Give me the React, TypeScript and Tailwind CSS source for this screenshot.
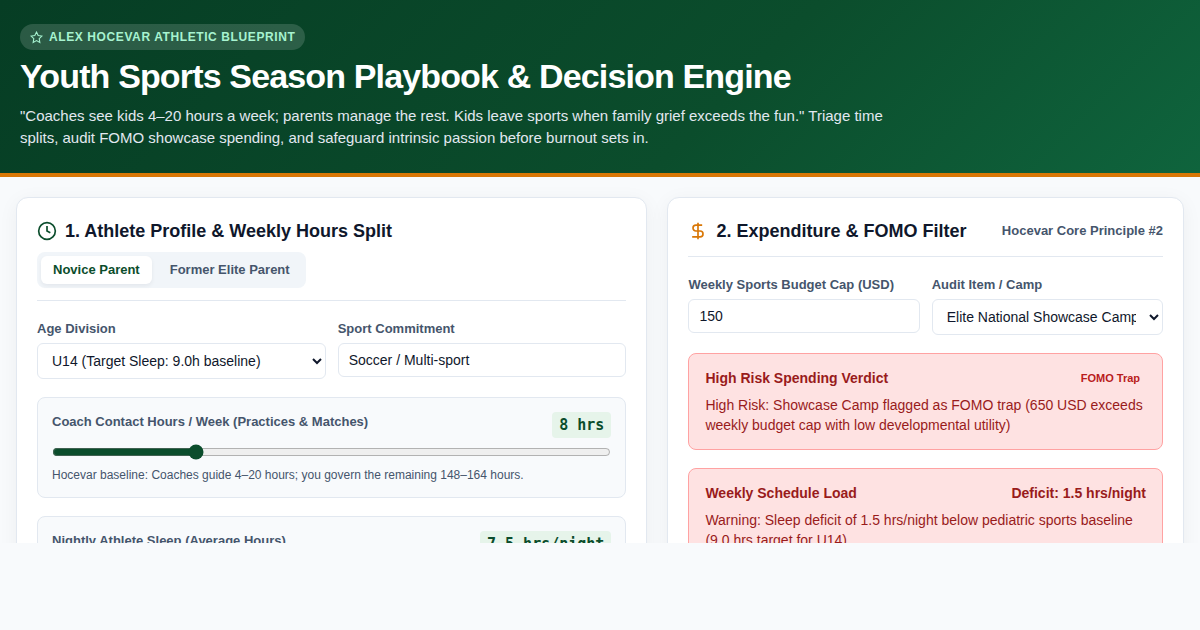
import React, { useState } from 'react';

interface SliderCardProps {
  id: string;
  label: string;
  unit: string;
  hint: string;
  min: number;
  max: number;
  step: number;
  value: number;
  onChange: (value: number) => void;
}

const SliderCard: React.FC<SliderCardProps> = ({ id, label, unit, hint, min, max, step, value, onChange }) => (
  <div className="rounded-lg border border-slate-200 bg-slate-50 p-3.5">
    <div className="flex items-start justify-between mb-1.5">
      <label htmlFor={id} className="text-[13px] leading-5 font-bold text-slate-600">{label}</label>
      <output htmlFor={id} className="rounded bg-[#e6f4ea] px-[7px] font-['DejaVu_Sans_Mono',monospace] text-[15px] leading-[26px] font-bold text-[#0b4d2c]">
        {value} {unit}
      </output>
    </div>
    <input
      id={id}
      type="range"
      min={min}
      max={max}
      step={step}
      value={value}
      onChange={(e) => onChange(Number(e.target.value))}
      className="block h-4 w-full accent-[#0b4d2c]"
    />
    <p className="mt-[7px] text-xs leading-4 text-slate-600">{hint}</p>
  </div>
);

interface AlertCardProps {
  title: string;
  aside: React.ReactNode;
  children: React.ReactNode;
}

const AlertCard: React.FC<AlertCardProps> = ({ title, aside, children }) => (
  <div className="rounded-lg border border-red-300 bg-[#fee2e2] px-4 py-3.5 text-[#991b1b]">
    <div className="mb-[7px] flex items-center justify-between text-sm leading-5 font-bold">
      <h3>{title}</h3>
      {aside}
    </div>
    <p className="text-sm leading-5">{children}</p>
  </div>
);

const StarIcon = () => (
  <svg viewBox="0 0 24 24" className="size-[13px]" fill="none" stroke="currentColor" strokeWidth="2" aria-hidden="true">
    <polygon points="12 2 15.09 8.26 22 9.27 17 14.14 18.18 21.02 12 17.77 5.82 21.02 7 14.14 2 9.27 8.91 8.26 12 2" />
  </svg>
);

const ClockIcon = () => (
  <svg viewBox="0 0 24 24" className="size-5 text-[#0b4d2c]" fill="none" stroke="currentColor" strokeWidth="2" aria-hidden="true">
    <circle cx="12" cy="12" r="10" />
    <path d="M12 6v6l4 2" />
  </svg>
);

const DollarIcon = () => (
  <svg viewBox="0 0 24 24" className="size-5 text-[#d97706]" fill="none" stroke="currentColor" strokeWidth="2" aria-hidden="true">
    <path d="M12 2v20M17 5H9.5a3.5 3.5 0 0 0 0 7h5a3.5 3.5 0 0 1 0 7H5" />
  </svg>
);

const App: React.FC = () => {
  const [parentType, setParentType] = useState<'novice' | 'elite'>('novice');
  const [age, setAge] = useState('U14');
  const [sport, setSport] = useState('Soccer / Multi-sport');
  const [coachHours, setCoachHours] = useState(8);
  const [sleepHours, setSleepHours] = useState(7.5);
  const [budget, setBudget] = useState('150');
  const [auditItem, setAuditItem] = useState('showcase');

  const card = 'flex flex-col gap-[18px] rounded-xl border border-slate-200 bg-white p-5 shadow-[0_4px_20px_rgba(15,23,42,0.05)]';
  const cardHeader = 'flex flex-wrap items-center justify-between gap-2 border-b border-slate-200 pb-3';
  const cardTitle = 'flex items-center gap-2 text-lg leading-[26px] font-bold text-slate-900';
  const label = 'mb-1 block text-[13px] leading-5 font-bold text-slate-600';
  const input = 'block h-[34px] w-full rounded-md border border-slate-200 bg-white px-2.5 text-sm text-slate-900';
  const select = 'block h-9 w-full rounded-md border border-slate-200 bg-white px-2.5 text-sm text-slate-900';
  const tab = 'rounded-md px-3 text-[13px] leading-7 font-bold';
  const activeTab = 'bg-white text-[#0b4d2c] shadow-[0_2px_4px_rgba(15,23,42,0.06)]';

  return (
    <div className="h-screen bg-slate-50 pb-[87px] font-['Liberation_Sans',Arial,sans-serif]">
      <div className="h-full overflow-hidden">
        <header className="border-b-4 border-[#d97706] bg-[linear-gradient(135deg,#063d24_0%,#0b4d2c_60%,#0f643d_100%)] px-5 py-6 text-white">
          <div className="inline-flex items-center gap-1.5 rounded-full bg-white/15 px-2.5 text-xs leading-[26px] font-bold tracking-wider text-[#a7f3d0] uppercase">
            <StarIcon />
            Alex Hocevar Athletic Blueprint
          </div>
          <h1 className="mt-[5px] mb-[9px] text-[34px] leading-10 font-bold tracking-tight">Youth Sports Season Playbook &amp; Decision Engine</h1>
          <p className="max-w-[880px] text-[15px] leading-[22px] text-slate-200">
            "Coaches see kids 4–20 hours a week; parents manage the rest. Kids leave sports when family grief exceeds the fun." Triage time splits, audit FOMO showcase spending, and safeguard intrinsic passion before burnout sets in.
          </p>
        </header>

        <main className="grid grid-cols-[11fr_9fr] items-start gap-5 px-4 py-5">
          <section className={card}>
            <div className={cardHeader}>
              <h2 className={cardTitle}>
                <ClockIcon />
                1. Athlete Profile &amp; Weekly Hours Split
              </h2>
              <div className="flex gap-1.5 rounded-lg bg-slate-100 p-1">
                <button onClick={() => setParentType('novice')} className={`${tab} ${parentType === 'novice' ? activeTab : 'text-slate-600'}`}>
                  Novice Parent
                </button>
                <button onClick={() => setParentType('elite')} className={`${tab} ${parentType === 'elite' ? activeTab : 'text-slate-600'}`}>
                  Former Elite Parent
                </button>
              </div>
            </div>

            <div className="grid grid-cols-2 gap-3">
              <div>
                <label htmlFor="age" className={label}>Age Division</label>
                <select id="age" value={age} onChange={(e) => setAge(e.target.value)} className={select}>
                  <option value="U14">U14 (Target Sleep: 9.0h baseline)</option>
                </select>
              </div>
              <div>
                <label htmlFor="sport" className={label}>Sport Commitment</label>
                <input id="sport" type="text" value={sport} onChange={(e) => setSport(e.target.value)} className={input} />
              </div>
            </div>

            <SliderCard
              id="coach-hours"
              label="Coach Contact Hours / Week (Practices &amp; Matches)"
              unit="hrs"
              hint="Hocevar baseline: Coaches guide 4–20 hours; you govern the remaining 148–164 hours."
              min={4}
              max={20}
              step={1}
              value={coachHours}
              onChange={setCoachHours}
            />
            <SliderCard
              id="sleep-hours"
              label="Nightly Athlete Sleep (Average Hours)"
              unit="hrs/night"
              hint="Pediatric sports baseline for U14: 9.0 hours a night."
              min={5}
              max={11}
              step={0.5}
              value={sleepHours}
              onChange={setSleepHours}
            />
          </section>

          <section className={card}>
            <div className={cardHeader}>
              <h2 className={cardTitle}>
                <DollarIcon />
                2. Expenditure &amp; FOMO Filter
              </h2>
              <span className="text-[13px] leading-5 font-bold text-slate-600">Hocevar Core Principle #2</span>
            </div>

            <div className="grid grid-cols-2 gap-3">
              <div>
                <label htmlFor="budget" className={label}>Weekly Sports Budget Cap (USD)</label>
                <input id="budget" type="text" inputMode="numeric" value={budget} onChange={(e) => setBudget(e.target.value)} className={input} />
              </div>
              <div>
                <label htmlFor="audit" className={label}>Audit Item / Camp</label>
                <select id="audit" value={auditItem} onChange={(e) => setAuditItem(e.target.value)} className={select}>
                  <option value="showcase">Elite National Showcase Camp (650 USD)</option>
                </select>
              </div>
            </div>

            <AlertCard
              title="High Risk Spending Verdict"
              aside={<span className="px-1.5 text-[11px] text-[#b91c1c]">FOMO Trap</span>}
            >
              High Risk: Showcase Camp flagged as FOMO trap (650 USD exceeds weekly budget cap with low developmental utility)
            </AlertCard>
            <AlertCard title="Weekly Schedule Load" aside={<span>Deficit: 1.5 hrs/night</span>}>
              Warning: Sleep deficit of 1.5 hrs/night below pediatric sports baseline (9.0 hrs target for U14)
            </AlertCard>
          </section>
        </main>
      </div>
    </div>
  );
};

export default App;
